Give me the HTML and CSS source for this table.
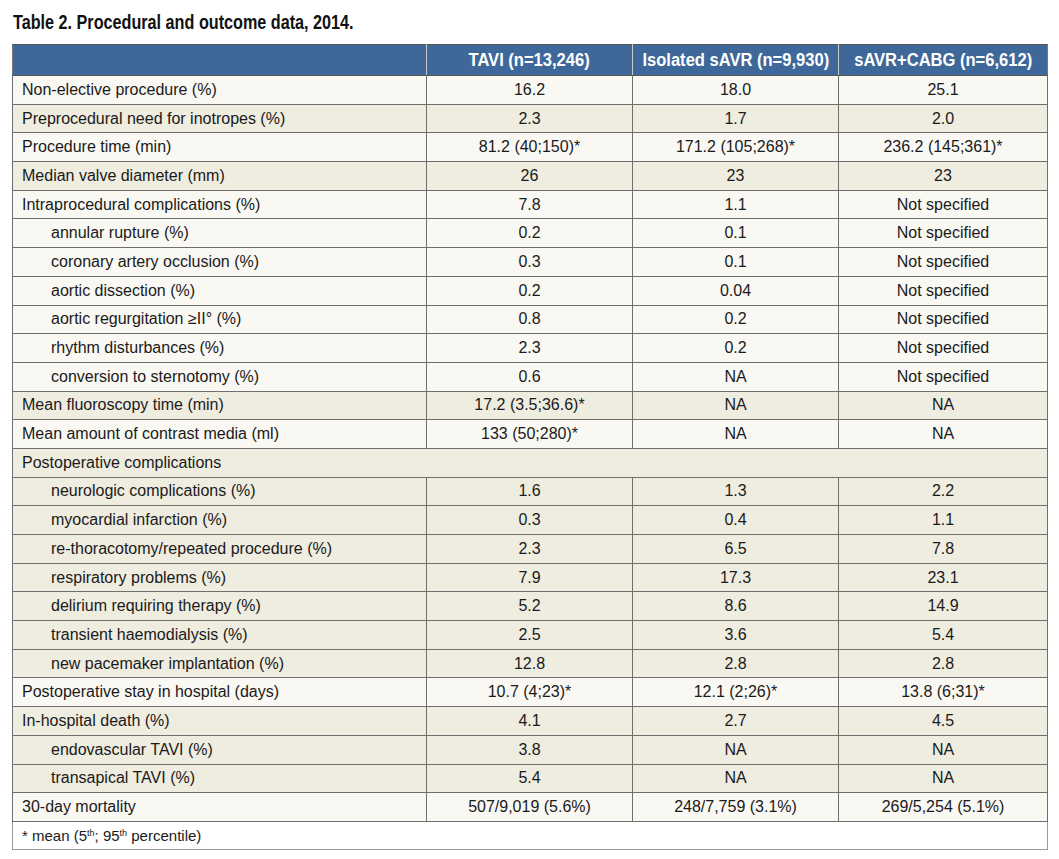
FILE: index.html
```html
<!DOCTYPE html>
<html lang="en">
<head>
<meta charset="utf-8">
<title>Table 2. Procedural and outcome data, 2014.</title>
<link rel="stylesheet" href="styles.css">
</head>
<body>
<div class="page">
  <h1 class="caption"><span class="squeeze">Table 2. Procedural and outcome data, 2014.</span></h1>
  <table class="data">
    <colgroup>
      <col class="c-label">
      <col class="c-val">
      <col class="c-val">
      <col class="c-val3">
    </colgroup>
    <thead>
      <tr>
        <th></th>
        <th><span class="squeeze">TAVI (n=13,246)</span></th>
        <th><span class="squeeze">Isolated sAVR (n=9,930)</span></th>
        <th><span class="squeeze">sAVR+CABG (n=6,612)</span></th>
      </tr>
    </thead>
    <tbody>
      <tr class="lt"><td>Non-elective procedure (%)</td><td>16.2</td><td>18.0</td><td>25.1</td></tr>
      <tr class="bg"><td>Preprocedural need for inotropes (%)</td><td>2.3</td><td>1.7</td><td>2.0</td></tr>
      <tr class="lt"><td>Procedure time (min)</td><td>81.2 (40;150)*</td><td>171.2 (105;268)*</td><td>236.2 (145;361)*</td></tr>
      <tr class="bg"><td>Median valve diameter (mm)</td><td>26</td><td>23</td><td>23</td></tr>
      <tr class="lt"><td>Intraprocedural complications (%)</td><td>7.8</td><td>1.1</td><td>Not specified</td></tr>
      <tr class="lt"><td class="ind">annular rupture (%)</td><td>0.2</td><td>0.1</td><td>Not specified</td></tr>
      <tr class="lt"><td class="ind">coronary artery occlusion (%)</td><td>0.3</td><td>0.1</td><td>Not specified</td></tr>
      <tr class="lt"><td class="ind">aortic dissection (%)</td><td>0.2</td><td>0.04</td><td>Not specified</td></tr>
      <tr class="lt"><td class="ind">aortic regurgitation ≥II° (%)</td><td>0.8</td><td>0.2</td><td>Not specified</td></tr>
      <tr class="lt"><td class="ind">rhythm disturbances (%)</td><td>2.3</td><td>0.2</td><td>Not specified</td></tr>
      <tr class="lt"><td class="ind">conversion to sternotomy (%)</td><td>0.6</td><td>NA</td><td>Not specified</td></tr>
      <tr class="bg"><td>Mean fluoroscopy time (min)</td><td>17.2 (3.5;36.6)*</td><td>NA</td><td>NA</td></tr>
      <tr class="lt"><td>Mean amount of contrast media (ml)</td><td>133 (50;280)*</td><td>NA</td><td>NA</td></tr>
      <tr class="bg"><td colspan="4">Postoperative complications</td></tr>
      <tr class="bg"><td class="ind">neurologic complications (%)</td><td>1.6</td><td>1.3</td><td>2.2</td></tr>
      <tr class="bg"><td class="ind">myocardial infarction (%)</td><td>0.3</td><td>0.4</td><td>1.1</td></tr>
      <tr class="bg"><td class="ind">re-thoracotomy/repeated procedure (%)</td><td>2.3</td><td>6.5</td><td>7.8</td></tr>
      <tr class="bg"><td class="ind">respiratory problems (%)</td><td>7.9</td><td>17.3</td><td>23.1</td></tr>
      <tr class="bg"><td class="ind">delirium requiring therapy (%)</td><td>5.2</td><td>8.6</td><td>14.9</td></tr>
      <tr class="bg"><td class="ind">transient haemodialysis (%)</td><td>2.5</td><td>3.6</td><td>5.4</td></tr>
      <tr class="bg"><td class="ind">new pacemaker implantation (%)</td><td>12.8</td><td>2.8</td><td>2.8</td></tr>
      <tr class="lt"><td>Postoperative stay in hospital (days)</td><td>10.7 (4;23)*</td><td>12.1 (2;26)*</td><td>13.8 (6;31)*</td></tr>
      <tr class="bg"><td>In-hospital death (%)</td><td>4.1</td><td>2.7</td><td>4.5</td></tr>
      <tr class="bg"><td class="ind">endovascular TAVI (%)</td><td>3.8</td><td>NA</td><td>NA</td></tr>
      <tr class="bg"><td class="ind">transapical TAVI (%)</td><td>5.4</td><td>NA</td><td>NA</td></tr>
      <tr class="lt"><td>30-day mortality</td><td>507/9,019 (5.6%)</td><td>248/7,759 (3.1%)</td><td>269/5,254 (5.1%)</td></tr>
    </tbody>
    <tfoot>
      <tr><td colspan="4">* mean (5<sup>th</sup>; 95<sup>th</sup> percentile)</td></tr>
    </tfoot>
  </table>
</div>
</body>
</html>
```
FILE: styles.css
```css
html, body {
  margin: 0;
  padding: 0;
  background: #ffffff;
}

.page {
  padding: 11px 12px 0 12px;
  font-family: "Liberation Sans", Arial, sans-serif;
  color: #1a1a1a;
}

.squeeze {
  display: inline-block;
  white-space: nowrap;
}

.caption {
  margin: 0 0 11px 1px;
  font-family: "Liberation Sans", Arial, sans-serif;
  font-weight: bold;
  font-size: 19.5px;
  line-height: 22px;
  color: #111111;
}

.caption .squeeze {
  transform: scaleX(0.83);
  transform-origin: left center;
}

.data {
  width: 1035px;
  border-collapse: collapse;
  table-layout: fixed;
  font-size: 16px;
}

.c-label { width: 414px; }
.c-val { width: 206px; }
.c-val3 { width: 209px; }

.data thead th {
  background: #3d6899;
  color: #ffffff;
  font-weight: bold;
  font-size: 17.5px;
  height: 30px;
  padding: 0;
  text-align: center;
  border-top: 1px solid #555555;
  border-left: 1px solid #c9c9c9;
  border-right: 1px solid #c9c9c9;
  border-bottom: 1px solid #555555;
}

.data thead th .squeeze {
  transform: scaleX(0.945);
  transform-origin: center center;
}

.data thead th:first-child { border-left: 1px solid #777777; }
.data thead th:last-child { border-right: 1px solid #777777; }

.data tbody td {
  height: 27.7px;
  padding: 0 4px;
  border: 1px solid #6f6f6f;
  text-align: center;
  white-space: nowrap;
}

.data tbody td:first-child {
  text-align: left;
  padding-left: 9px;
}

.data tbody td.ind { padding-left: 38px; }

.data tbody tr.lt td { background: #f9f8f3; }
.data tbody tr.bg td { background: #efece0; }

.data tfoot td {
  height: 27px;
  padding: 0 0 0 9px;
  background: #ffffff;
  border: 1px solid #9a9a9a;
  font-size: 15px;
}

.data tfoot sup {
  font-size: 9px;
  line-height: 0;
  vertical-align: 5px;
}
```
